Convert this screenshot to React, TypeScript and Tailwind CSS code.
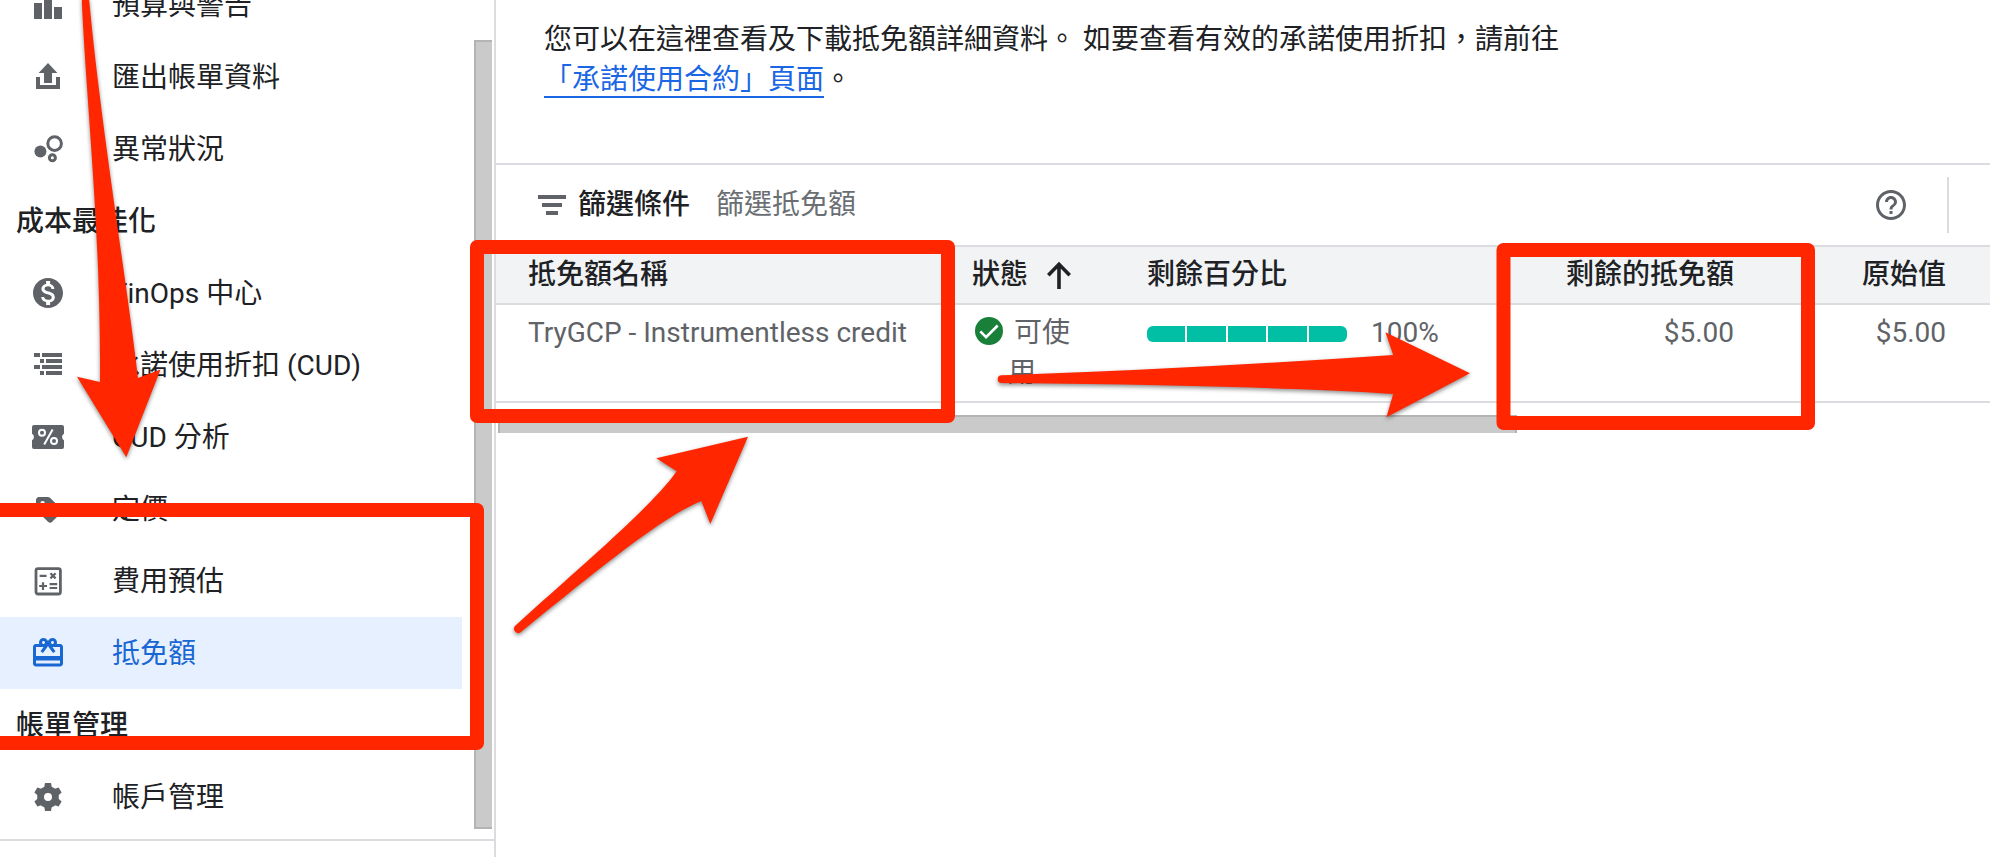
import type { ReactNode } from "react";

type NavEntry =
  | { kind: "item"; label: string; icon: ReactNode; active?: boolean }
  | { kind: "heading"; label: string };

function Icon({ box = 18, children }: { box?: number; children: ReactNode }) {
  return (
    <svg viewBox={`0 0 ${box} ${box}`} className="size-9 shrink-0" fill="currentColor" aria-hidden="true">
      {children}
    </svg>
  );
}

const ENTRIES: NavEntry[] = [
  {
    kind: "item",
    label: "預算與警告",
    icon: (
      <Icon>
        <path d="M2 8h4v8H2zM7 2h4v14H7zM12 10h4v6h-4z" />
      </Icon>
    ),
  },
  {
    kind: "item",
    label: "匯出帳單資料",
    icon: (
      <Icon>
        <path d="M9 2l4.7 5H11v5H7V7H4.3zM3 9h2v4h8V9h2v6H3z" />
      </Icon>
    ),
  },
  {
    kind: "item",
    label: "異常狀況",
    icon: (
      <Icon>
        <circle cx="5.2" cy="10.3" r="3" />
        <circle cx="12.3" cy="6.3" r="3.4" fill="none" stroke="currentColor" strokeWidth="1.5" />
        <circle cx="11.2" cy="13.4" r="1.5" fill="none" stroke="currentColor" strokeWidth="1.5" />
      </Icon>
    ),
  },
  { kind: "heading", label: "成本最佳化" },
  {
    kind: "item",
    label: "FinOps 中心",
    icon: (
      <Icon box={24}>
        <path d="M12 2C6.48 2 2 6.48 2 12s4.48 10 10 10 10-4.48 10-10S17.52 2 12 2zm1.41 16.09V20h-2.67v-1.93c-1.71-.36-3.16-1.46-3.27-3.4h1.96c.1 1.05.82 1.87 2.65 1.87 1.96 0 2.4-.98 2.4-1.59 0-.83-.44-1.61-2.67-2.14-2.48-.6-4.18-1.62-4.18-3.67 0-1.72 1.39-2.84 3.11-3.21V4h2.67v1.95c1.86.45 2.79 1.86 2.85 3.39H14.3c-.05-1.11-.64-1.87-2.22-1.87-1.5 0-2.4.68-2.4 1.64 0 .84.65 1.39 2.67 1.91s4.18 1.39 4.18 3.91c-.02 1.83-1.38 2.83-3.12 3.16z" />
      </Icon>
    ),
  },
  {
    kind: "item",
    label: "承諾使用折扣 (CUD)",
    icon: (
      <Icon>
        <path d="M2 3h3v2H2zM6 3h10v2H6zM5 6h2v2H5zM8 6h8v2H8zM2 9h3v2H2zM6 9h10v2H6zM5 12h2v2H5zM8 12h8v2H8z" />
      </Icon>
    ),
  },
  {
    kind: "item",
    label: "CUD 分析",
    icon: (
      <Icon>
        <path d="M2 3h14a1 1 0 0 1 1 1v3.4a1.8 1.8 0 0 0 0 3.2V14a1 1 0 0 1-1 1H2a1 1 0 0 1-1-1v-3.4a1.8 1.8 0 0 0 0-3.2V4a1 1 0 0 1 1-1z" />
        <g fill="none" stroke="#fff" strokeWidth="1">
          <circle cx="6" cy="6.9" r="1.5" />
          <circle cx="12" cy="11" r="1.5" />
          <path d="M11.3 5.3l-4.2 7.4" />
        </g>
      </Icon>
    ),
  },
  {
    kind: "item",
    label: "定價",
    icon: (
      <Icon>
        <path
          fillRule="evenodd"
          d="M4.5 3h4.4c.4 0 .8.2 1.1.4l5.5 5.5c.6.6.6 1.5 0 2.1l-4.4 4.4c-.6.6-1.5.6-2.1 0L3.4 9.9C3.2 9.6 3 9.2 3 8.8V4.500C3 3.700 3.700 3 4.500 3zM6.300 5a1.100 1.100 0 1 0 0 2.200 1.100 1.100 0 0 0 0-2.200z"
        />
      </Icon>
    ),
  },
  {
    kind: "item",
    label: "費用預估",
    icon: (
      <Icon>
        <g fill="none" stroke="currentColor">
          <rect x="3" y="2.800" width="12.200" height="12.700" rx="1" strokeWidth="1.400" />
          <path
            strokeWidth="1.100"
            d="M4.800 6.400h3.500M10.200 5.100l2.600 2.600M12.800 5.100l-2.600 2.600M4.600 11.500h3.900M6.500 9.600v3.900M9.800 10.600h3.800M9.800 12.500h3.800"
          />
        </g>
      </Icon>
    ),
  },
  {
    kind: "item",
    label: "抵免額",
    active: true,
    icon: (
      <Icon box={24}>
        <path d="M20 6h-2.18c.11-.31.18-.65.18-1 0-1.66-1.34-3-3-3-1.05 0-1.96.54-2.5 1.35l-.5.67-.5-.68C10.96 2.54 10.05 2 9 2 7.34 2 6 3.34 6 5c0 .35.07.69.18 1H4c-1.11 0-1.99.89-1.99 2L2 19c0 1.11.89 2 2 2h16c1.11 0 2-.89 2-2V8c0-1.11-.89-2-2-2zm-5-2c.55 0 1 .45 1 1s-.45 1-1 1-1-.45-1-1 .45-1 1-1zM9 4c.55 0 1 .45 1 1s-.45 1-1 1-1-.45-1-1 .45-1 1-1zm11 15H4v-2h16v2zm0-5H4V8h5.08L7 10.83 8.62 12 11 8.76l1-1.36 1 1.36L15.38 12 17 10.83 14.92 8H20v6z" />
      </Icon>
    ),
  },
  { kind: "heading", label: "帳單管理" },
  {
    kind: "item",
    label: "帳戶管理",
    icon: (
      <Icon>
        <circle cx="9" cy="9" r="3.700" fill="none" stroke="currentColor" strokeWidth="3.400" />
        {[0, 60, 120, 180, 240, 300].map((angle) => (
          <path key={angle} d="M7.500 2h3l.5 2.700H7z" transform={`rotate(${angle} 9 9)`} />
        ))}
      </Icon>
    ),
  },
];

function Sidebar() {
  return (
    <aside className="flex w-[496px] shrink-0 flex-col border-r-2 border-[#dadce0]">
      <div className="flex border-b-2 border-[#dadce0]">
        <nav className="-mt-[31px] mr-3 flex-1 pb-1.5">
          <ul>
            {ENTRIES.map((entry) => (
              <li key={entry.label}>
                {entry.kind === "heading" ? (
                  <h2 className="flex h-18 items-center pt-0.5 pl-4 font-medium">{entry.label}</h2>
                ) : (
                  <a
                    href="#"
                    aria-current={entry.active ? "page" : undefined}
                    className={
                      entry.active
                        ? "flex h-18 items-center gap-[46px] bg-[#e6f0ff] pl-[30px] text-[#1967d2]"
                        : "flex h-18 items-center gap-[46px] pl-[30px]"
                    }
                  >
                    <span className={entry.active ? "text-[#1967d2]" : "text-[#5f6368]"}>{entry.icon}</span>
                    <span className="pt-0.5">{entry.label}</span>
                  </a>
                )}
              </li>
            ))}
          </ul>
        </nav>
        <div className="mt-10 mr-0.5 mb-2.5 w-[18px] border-y-2 border-l-2 border-[#b4b4b4] bg-[#cacaca]" />
      </div>
    </aside>
  );
}

function FilterBar() {
  return (
    <div className="flex h-[84px] items-center border-y-2 border-[#dadce0] pl-[42px]">
      <svg viewBox="0 0 28 20" className="h-5 w-7 shrink-0 fill-[#5f6368]" aria-hidden="true">
        <path d="M0 0h28v4H0zM4 8h20v4H4zM8 16h12v4H8z" />
      </svg>
      <label htmlFor="credit-filter" className="ml-3 font-medium">
        篩選條件
      </label>
      <input
        id="credit-filter"
        type="text"
        placeholder="篩選抵免額"
        className="ml-[26px] min-w-0 flex-1 bg-transparent outline-none placeholder:text-[#6b6f74]"
      />
      <button type="button" aria-label="說明" className="text-[#5f6368]">
        <Icon box={24}>
          <path d="M11 18h2v-2h-2v2zm1-16C6.48 2 2 6.48 2 12s4.48 10 10 10 10-4.480 10-10S17.520 2 12 2zm0 18c-4.410 0-8-3.590-8-8s3.590-8 8-8 8 3.590 8 8-3.590 8-8 8zm0-14c-2.210 0-4 1.790-4 4h2c0-1.100.900-2 2-2s2 .900 2 2c0 2-3 1.750-3 5h2c0-2.250 3-2.500 3-5 0-2.210-1.790-4-4-4z" />
        </Icon>
      </button>
      <div className="mr-[41px] ml-[38px] h-14 w-0.5 bg-[#dadce0]" />
    </div>
  );
}

function CreditsTable() {
  return (
    <table className="w-full table-fixed border-collapse leading-10">
      <colgroup>
        <col />
        <col className="w-[175px]" />
        <col className="w-[323px]" />
        <col className="w-[296px]" />
        <col className="w-[212px]" />
        <col className="w-7" />
      </colgroup>
      <thead>
        <tr className="h-[57px] border-b-2 border-[#dadce0] bg-[#f1f3f4]">
          <th className="pl-8 text-left font-medium">抵免額名稱</th>
          <th className="px-4 text-left font-medium">
            <button type="button" className="flex items-center gap-[17px]">
              狀態
              <svg viewBox="0 0 28 28" className="size-7" fill="none" stroke="currentColor" strokeWidth="3.600" aria-hidden="true">
                <path d="M14 28V3M3.300 14.200L14 3.300l10.700 10.900" />
              </svg>
            </button>
          </th>
          <th className="px-4 text-left font-medium">剩餘百分比</th>
          <th className="px-4 text-right font-medium">剩餘的抵免額</th>
          <th className="px-4 text-right font-medium">原始值</th>
          <td />
        </tr>
      </thead>
      <tbody>
        <tr className="border-b-2 border-[#dadce0] align-top text-[#5f6368]">
          <td className="py-2 pl-8">TryGCP - Instrumentless credit</td>
          <td className="px-4 py-2">
            <div className="w-[120px] pl-9">
              <svg viewBox="2 2 20 20" className="mr-1 -ml-[33px] inline size-7 -translate-y-1" aria-hidden="true">
                <circle cx="12" cy="12" r="10" fill="#188038" />
                <path d="M5.800 12.300l4.100 4.100 8.300-8.300" fill="none" stroke="#fff" strokeWidth="1.900" />
              </svg>{" "}
              可使用
            </div>
          </td>
          <td className="px-4 py-2">
            <div className="flex items-center gap-6">
              <div className="mt-0.5 grid h-4 w-[200px] shrink-0 grid-cols-5 gap-0.5 overflow-hidden rounded-md">
                {[20, 40, 60, 80, 100].map((step) => (
                  <span key={step} className="bg-[#00bfa5]" />
                ))}
              </div>
              100%
            </div>
          </td>
          <td className="px-4 py-2 text-right">$5.00</td>
          <td className="px-4 py-2 text-right">$5.00</td>
          <td />
        </tr>
      </tbody>
    </table>
  );
}

function Annotations() {
  return (
    <svg
      width="1990"
      height="857"
      className="pointer-events-none absolute top-0 left-0 max-w-none"
      aria-hidden="true"
    >
      <g fill="none" stroke="#ff2600" strokeWidth="14" strokeLinejoin="round">
        <rect x="-20" y="510" width="497" height="233" />
        <rect x="477" y="247" width="471" height="169" />
        <rect x="1503.500" y="250" width="304.500" height="173" />
      </g>
      <g fill="#ff2600" className="drop-shadow-[0_2px_2px_rgba(0,0,0,0.45)]">
        <path d="M81.700 -2C86 100 101 230 100 382L77 376.700L126.300 457.300L160.500 369.500L138 378C128 290 100 120 89 -2z" />
        <path d="M515 626C573 573 652 507 676.700 471.300L656.300 458.300L748 436.700L710.300 524L701.300 501C662 517 600 568 520 632.700A4.300 4.300 0 0 1 515 626z" />
        <path d="M1001 375.300Q1190 369 1393.200 355L1385.400 332.300L1470 373.300L1386.400 417.300L1393.200 394Q1280 386 1001 383A3.900 3.900 0 0 1 1001 375.300z" />
      </g>
    </svg>
  );
}

export default function App() {
  return (
    <div
      lang="zh-Hant"
      className="relative flex min-h-screen overflow-hidden bg-white font-['Roboto','Noto_Sans_CJK_TC',sans-serif] text-[28px] leading-10 text-[#202124]"
    >
      <Sidebar />
      <main className="min-w-0 flex-1">
        <p className="mb-[63px] ml-12 max-w-[1040px] pt-5">
          您可以在這裡查看及下載抵免額詳細資料。 如要查看有效的承諾使用折扣，請前往
          <a href="#" className="border-b-2 border-[#1a66e5] text-[#1a66e5]">
            「承諾使用合約」頁面
          </a>
          。
        </p>
        <FilterBar />
        <CreditsTable />
        <div className="mt-3 ml-0.5 h-[18px] w-[1019px] border-x-2 border-t-2 border-[#b4b4b4] bg-[#cacaca]" />
      </main>
      <Annotations />
    </div>
  );
}
